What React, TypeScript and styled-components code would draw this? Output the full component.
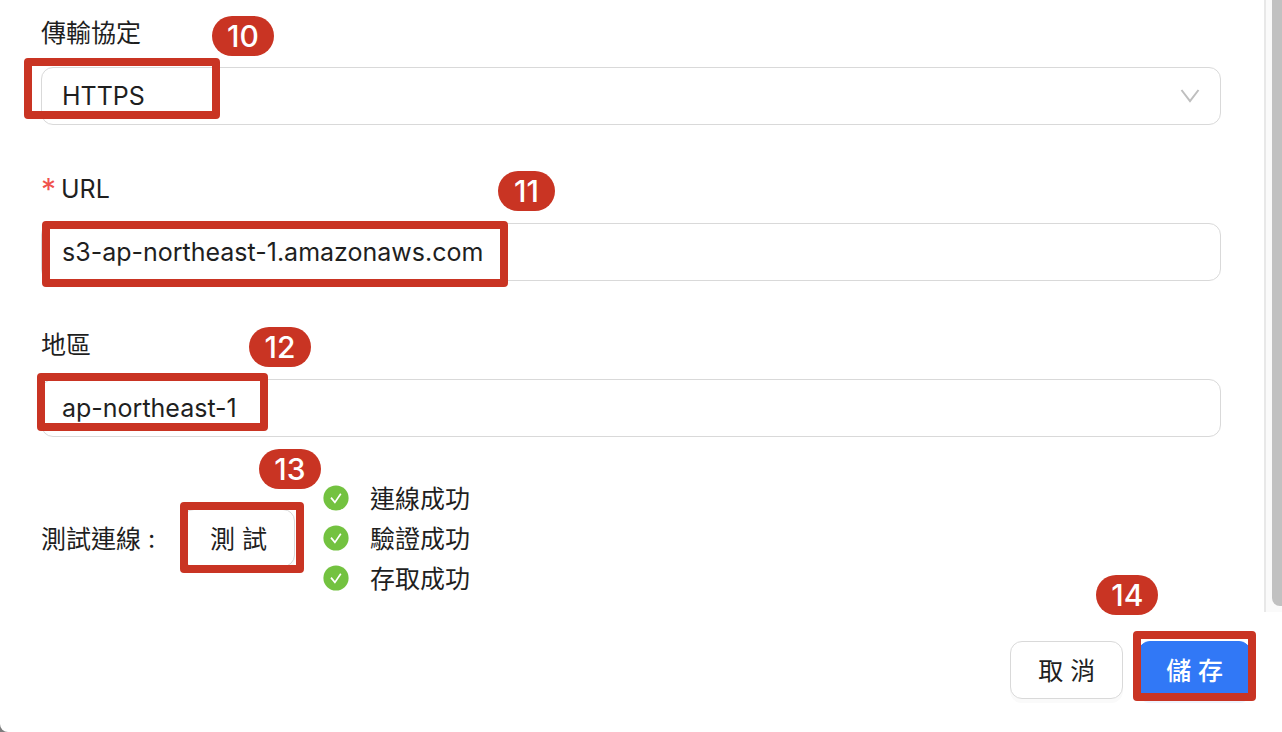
import React from "react";
import styled, { createGlobalStyle } from "styled-components";

const Global = createGlobalStyle`
  * { box-sizing: border-box; }
  html { background: #7d7d7d; }
  body { margin: 0; }
  body, input, select, button {
    font-family: Inter, "Noto Sans CJK TC", sans-serif;
    font-size: 25px;
    color: #1f1f1f;
  }
`;

const Page = styled.div`
  display: flex;
  flex-direction: column;
  min-height: 100vh;
  background: #fff;
  border-bottom-left-radius: 8px;
`;

const Body = styled.div`
  display: flex;
`;

const Form = styled.form`
  flex: 1;
  min-width: 0;
  display: flex;
  flex-direction: column;
  padding: 14px 43px 14px 41px;
`;

const ScrollTrack = styled.div`
  width: 18px;
  padding: 0 0 6px 6px;
  display: flex;
  background: #fafafa;
  border-left: 2px solid #e8e8e8;
`;

const ScrollThumb = styled.div`
  flex: 1;
  background: #c1c1c1;
  border-bottom-left-radius: 8px;
`;

const Field = styled.div`
  position: relative;
  display: flex;
  flex-direction: column;
  gap: 15px;
  margin-bottom: 45px;

  &:last-of-type { margin-bottom: 0; }
`;

const Label = styled.label`
  display: flex;
  gap: 8px;
  line-height: 38px;
`;

const Required = styled.span`
  width: 12px;
  color: #f0524d;
  font-size: 30px;
`;

const Control = styled.div`
  position: relative;
  display: flex;
  align-items: center;
`;

const controlBox = `
  width: 100%;
  height: 58px;
  padding: 0 20px;
  background: #fff;
  border: 1px solid #d9d9d9;
  border-radius: 12px;
  outline: none;
`;

const TextInput = styled.input`
  ${controlBox}
`;

const Select = styled.select`
  ${controlBox}
  appearance: none;
`;

const Chevron = styled.svg`
  position: absolute;
  right: 21px;
  width: 20px;
  height: 16px;
  pointer-events: none;
`;

const Mark = styled.span<{ $top: number; $left: number; $width: number; $height: number }>`
  position: absolute;
  top: ${(p) => p.$top}px;
  left: ${(p) => p.$left}px;
  width: ${(p) => p.$width}px;
  height: ${(p) => p.$height}px;
  border: 8px solid #c93423;
  border-radius: 4px;
  pointer-events: none;
`;

const Step = styled.span<{ $top: number; $left: number; $width?: number }>`
  position: absolute;
  top: ${(p) => p.$top}px;
  left: ${(p) => p.$left}px;
  width: ${(p) => p.$width ?? 62}px;
  height: 40px;
  border-radius: 20px;
  background: #c93423;
  color: #fff;
  font-size: 30px;
  font-weight: 500;
  line-height: 40px;
  text-align: center;
`;

const TestRow = styled.section`
  display: flex;
  align-items: center;
  margin-top: 41px;
`;

const TestLabel = styled.span`
  width: 141px;
  padding-bottom: 3px;
`;

const Anchor = styled.div`
  position: relative;
  display: flex;
`;

const Button = styled.button<{ $primary?: boolean }>`
  height: 58px;
  padding: 0 27px 3px;
  white-space: nowrap;
  border-radius: 12px;
  border: 1px solid ${(p) => (p.$primary ? "#3178f6" : "#d9d9d9")};
  background: ${(p) => (p.$primary ? "#3178f6" : "#fff")};
  color: ${(p) => (p.$primary ? "#fff" : "#1f1f1f")};
  font-weight: ${(p) => (p.$primary ? 500 : 400)};
  box-shadow: 0 4px 0 ${(p) => (p.$primary ? "#eef4fe" : "#fafafa")};
`;

const Results = styled.ul`
  list-style: none;
  margin: 0 0 0 28px;
  padding: 0;
`;

const Result = styled.li`
  display: flex;
  align-items: center;
  gap: 21px;
  height: 40px;
`;

const ResultText = styled.span`
  padding-bottom: 3px;
`;

const Footer = styled.footer`
  display: flex;
  justify-content: flex-end;
  gap: 15px;
  padding: 29px 31px 33px;
`;

const Check = () => (
  <svg width="26" height="26" viewBox="0 0 26 26" aria-hidden="true">
    <circle cx="13" cy="13" r="12.6" fill="#73c240" />
    <path d="M8 12.6l3.9 4.8 5.9-8.6" fill="none" stroke="#fff" strokeWidth="1.7" />
  </svg>
);

const results = ["連線成功", "驗證成功", "存取成功"];

export default function App() {
  return (
    <>
      <Global />
      <Page>
        <Body>
          <Form onSubmit={(e) => e.preventDefault()}>
            <Field>
              <Label htmlFor="protocol">傳輸協定</Label>
              <Control>
                <Select id="protocol" defaultValue="HTTPS">
                  <option>HTTPS</option>
                </Select>
                <Chevron viewBox="0 0 20 16" aria-hidden="true">
                  <path d="M1.5 2l8.5 11 8.5-11" fill="none" stroke="#bfbfbf" strokeWidth="2" />
                </Chevron>
                <Mark $top={-9} $left={-17} $width={196} $height={61} />
              </Control>
              <Step $top={2} $left={171}>10</Step>
            </Field>

            <Field>
              <Label htmlFor="url">
                <Required>*</Required>URL
              </Label>
              <Control>
                <TextInput id="url" defaultValue="s3-ap-northeast-1.amazonaws.com" />
                <Mark $top={-2} $left={1} $width={466} $height={66} />
              </Control>
              <Step $top={1} $left={457} $width={57}>11</Step>
            </Field>

            <Field>
              <Label htmlFor="region">地區</Label>
              <Control>
                <TextInput id="region" defaultValue="ap-northeast-1" />
                <Mark $top={-6} $left={-4} $width={231} $height={58} />
              </Control>
              <Step $top={1} $left={208}>12</Step>
            </Field>

            <TestRow>
              <TestLabel>測試連線 :</TestLabel>
              <Anchor>
                <Button type="button">測 試</Button>
                <Mark $top={-7} $left={-2} $width={124} $height={71} />
                <Step $top={-60} $left={77}>13</Step>
              </Anchor>
              <Results>
                {results.map((text) => (
                  <Result key={text}>
                    <Check />
                    <ResultText>{text}</ResultText>
                  </Result>
                ))}
              </Results>
            </TestRow>
          </Form>
          <ScrollTrack>
            <ScrollThumb />
          </ScrollTrack>
        </Body>
        <Footer>
          <Button type="button">取 消</Button>
          <Anchor>
            <Button type="submit" $primary>儲 存</Button>
            <Mark $top={-10} $left={-5} $width={123} $height={70} />
            <Step $top={-66} $left={-42}>14</Step>
          </Anchor>
        </Footer>
      </Page>
    </>
  );
}
